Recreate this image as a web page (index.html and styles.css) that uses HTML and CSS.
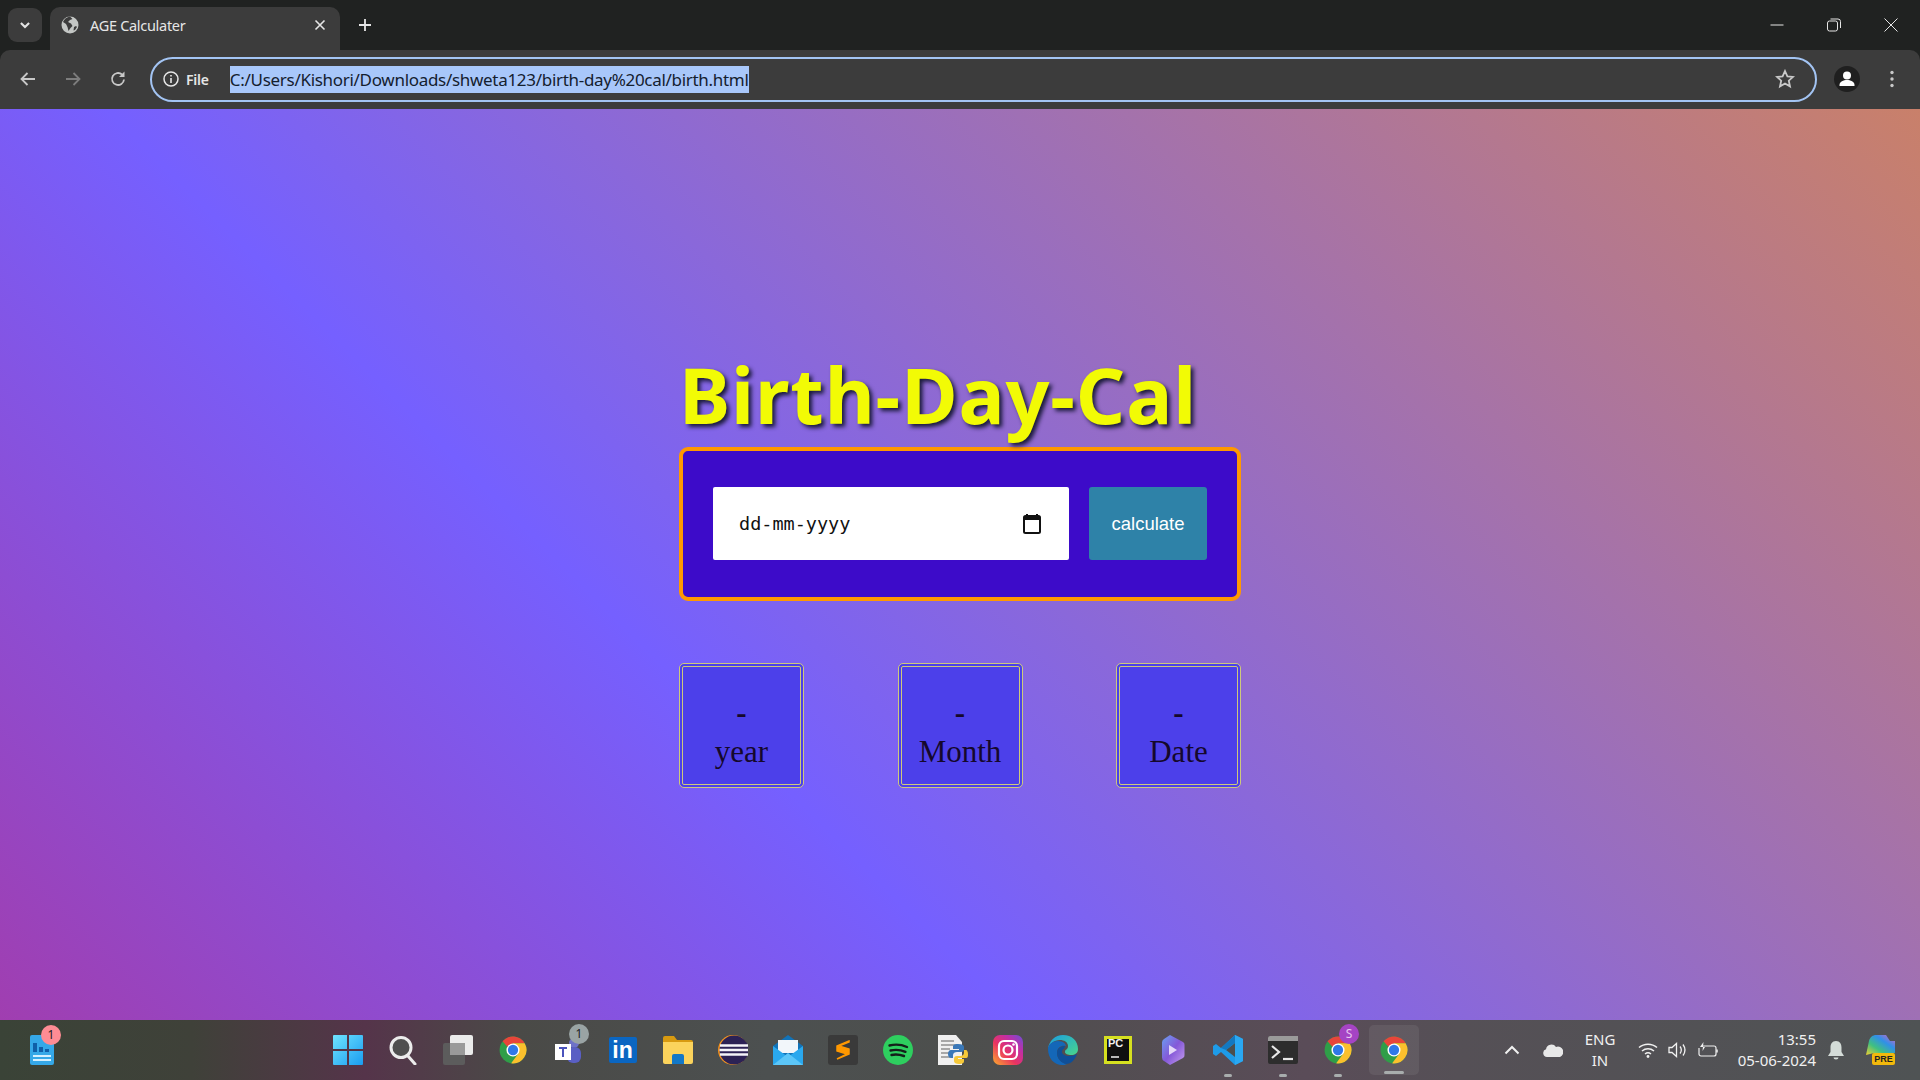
FILE: index.html
```html
<!DOCTYPE html>
<html lang="en">
<head>
	<meta charset="UTF-8">
	<title>AGE Calculater</title>
	<link rel="stylesheet" href="styles.css">
</head>
<body>
	<svg class="defs" width="0" height="0">
		<symbol id="chrome" viewBox="0 0 24 24">
			<circle cx="12" cy="12" r="11.5" fill="#2f9e48"/>
			<path d="M3 4.6A11.5 11.5 0 0 1 22 6.3H12L7.2 9.2Z" fill="#e8453a"/>
			<path d="M22 6.3H12L16.8 14.8 10.4 23.4A11.5 11.5 0 0 0 22 6.3Z" fill="#fbc02d"/>
			<circle cx="12" cy="12" r="5.6" fill="#fff"/>
			<circle cx="12" cy="12" r="4.4" fill="#2f78e8"/>
		</symbol>
	</svg>

	<!-- tab strip -->
	<div class="tabstrip">
		<div class="tablist-btn">
			<svg width="14" height="14" viewBox="0 0 12 12"><path d="M2.5 4.2 6 7.8 9.500 4.200" fill="none" stroke="#e4e4e4" stroke-width="1.800"/></svg>
		</div>
		<div class="tab">
			<svg class="tab-globe" width="18" height="18" viewBox="0 0 18 18">
				<circle cx="9" cy="9" r="8.500" fill="#c4c7c5"/>
				<path d="M9 .5C6 1 3 3 2 6l3 2 1.500 3 1 4 2-3 2-2-1.500-2.500L7 6l2-2 2.500-1ZM13 11l2-1 1 1-2 3-1.500.5Z" fill="#3c3c3c"/>
			</svg>
			<span class="tab-title">AGE Calculater</span>
			<svg class="tab-close" width="12" height="12" viewBox="0 0 12 12"><path d="M1.500 1.500 10.500 10.500M10.500 1.500 1.500 10.500" stroke="#e6e6e6" stroke-width="1.600"/></svg>
		</div>
		<svg class="newtab" width="14" height="14" viewBox="0 0 14 14"><path d="M7 1V13M1 7H13" stroke="#e6e6e6" stroke-width="1.800"/></svg>
		<div class="winctl">
			<svg width="14" height="14" viewBox="0 0 14 14"><path d="M.5 7H13.500" stroke="#e6e6e6"/></svg>
			<svg width="14" height="14" viewBox="0 0 14 14"><rect x=".5" y="3" width="10" height="10" rx="2" fill="none" stroke="#e6e6e6"/><path d="M3.500 1H11a2.500 2.500 0 0 1 2.500 2.500V10" fill="none" stroke="#e6e6e6"/></svg>
			<svg width="14" height="14" viewBox="0 0 14 14"><path d="M.5.5 13.500 13.500M13.500.5.5 13.500" stroke="#e6e6e6"/></svg>
		</div>
	</div>

	<!-- address bar -->
	<div class="toolbar">
		<svg class="nav" width="18" height="18" viewBox="0 0 18 18"><path d="M16 9H3M8.500 3 2.500 9l6 6" fill="none" stroke="#c8c8c8" stroke-width="1.800"/></svg>
		<svg class="nav" width="18" height="18" viewBox="0 0 18 18"><path d="M2 9H15M9.500 3l6 6-6 6" fill="none" stroke="#7d7d7d" stroke-width="1.800"/></svg>
		<svg class="nav" width="18" height="18" viewBox="0 0 18 18"><path d="M15 9.500A6 6 0 1 1 13 4.500" fill="none" stroke="#c8c8c8" stroke-width="1.800"/><path d="M15.500 1.500V7H10Z" fill="#c8c8c8"/></svg>
		<div class="omnibox">
			<svg width="16" height="16" viewBox="0 0 16 16"><circle cx="8" cy="8" r="7" fill="none" stroke="#e6e6e6" stroke-width="1.500"/><path d="M8 7V12M8 4V5.600" stroke="#e6e6e6" stroke-width="1.600"/></svg>
			<span class="chip">File</span>
			<span class="url">C:/Users/Kishori/Downloads/shweta123/birth-day%20cal/birth.html</span>
			<svg class="star" width="20" height="20" viewBox="0 0 20 20"><path d="M10 2l2.400 5.300 5.600.6-4.200 3.800 1.200 5.700L10 14.500l-5 2.900 1.200-5.700L2 7.900l5.600-.6Z" fill="none" stroke="#c8c8c8" stroke-width="1.800"/></svg>
		</div>
		<svg class="avatar" width="26" height="26" viewBox="0 0 26 26"><circle cx="13" cy="13" r="13" fill="#1f1f1f"/><circle cx="13" cy="9.500" r="4" fill="#fff"/><path d="M5.500 19c0-3.500 4-5 7.500-5s7.500 1.500 7.500 5v1h-15Z" fill="#fff"/></svg>
		<svg class="kebab" width="4" height="18" viewBox="0 0 4 18"><circle cx="2" cy="2.500" r="1.700" fill="#c8c8c8"/><circle cx="2" cy="9" r="1.700" fill="#c8c8c8"/><circle cx="2" cy="15.500" r="1.700" fill="#c8c8c8"/></svg>
	</div>

	<!-- the page itself -->
	<main class="page">
		<div class="calc">
			<h1>Birth-Day-Cal</h1>
			<div class="card">
				<div class="dateinput">
					<span>dd-mm-yyyy</span>
					<svg width="18" height="20" viewBox="0 0 18 20"><path d="M4 0V3M14 0V3" stroke="#111" stroke-width="2"/><rect x="1" y="2" width="16" height="17" rx="1.500" fill="none" stroke="#111" stroke-width="2"/><rect x="1" y="2" width="16" height="4" fill="#111"/></svg>
				</div>
				<button class="calcbtn">calculate</button>
			</div>
			<div class="results">
				<div class="result"><b>-</b><br>year</div>
				<div class="result"><b>-</b><br>Month</div>
				<div class="result"><b>-</b><br>Date</div>
			</div>
		</div>
	</main>

	<!-- windows taskbar -->
	<footer class="taskbar">
		<div class="slot widget">
			<svg width="24" height="30" viewBox="0 0 24 30"><rect width="24" height="30" rx="2" fill="#35a8e8"/><path d="M3 8h4v9H3ZM9 12h4v5H9ZM15 14h4v3h-4Z" fill="#0f5fa8"/><path d="M3 21h18M3 25h18" stroke="#d4f0ff" stroke-width="2"/></svg>
			<span class="badge badge-pink">1</span>
		</div>
		<div class="apps">
			<div class="slot">
				<svg width="30" height="30" viewBox="0 0 30 30"><defs><linearGradient id="win" x1="0" y1="0" x2="1" y2="1"><stop offset="0" stop-color="#6fe4ff"/><stop offset="1" stop-color="#1a9cf0"/></linearGradient></defs><path d="M0 1a1 1 0 0 1 1-1H14V14H0ZM16 0H29a1 1 0 0 1 1 1V14H16ZM0 16H14V30H1a1 1 0 0 1-1-1ZM16 16H30V29a1 1 0 0 1-1 1H16Z" fill="url(#win)"/></svg>
			</div>
			<div class="slot">
				<svg width="28" height="30" viewBox="0 0 28 30"><circle cx="12" cy="12.500" r="10" fill="#4f4f4f" stroke="#ececec" stroke-width="3"/><path d="M19 21l7 8" stroke="#ececec" stroke-width="3" stroke-linecap="round"/></svg>
			</div>
			<div class="slot">
				<svg width="30" height="30" viewBox="0 0 30 30"><rect y="8" width="22" height="22" rx="2" fill="#5c5c5c"/><rect x="7" width="23" height="20" rx="2" fill="#ebebeb"/><rect x="7" y="8" width="15" height="12" fill="#9a9a9a"/></svg>
			</div>
			<div class="slot"><svg width="28" height="30"><use href="#chrome"/></svg></div>
			<div class="slot">
				<svg width="30" height="28" viewBox="0 0 30 28"><circle cx="21" cy="7" r="5" fill="#6f72c8"/><rect x="14" y="11" width="14" height="16" rx="6" fill="#5a5fc4"/><rect x="2" y="8" width="16" height="16" fill="#fff"/><path d="M6 11h8v2h-3v8H9v-8H6Z" fill="#4b53bc"/></svg>
				<span class="badge badge-grey">1</span>
			</div>
			<div class="slot"><span class="linkedin">in</span></div>
			<div class="slot">
				<svg width="30" height="28" viewBox="0 0 30 28"><path d="M0 2a2 2 0 0 1 2-2h9l3 4h14a2 2 0 0 1 2 2v4H0Z" fill="#d89a10"/><path d="M0 6H30V26a2 2 0 0 1-2 2H2a2 2 0 0 1-2-2Z" fill="#fbd35c"/><path d="M9 20a2 2 0 0 1 2-2h8a2 2 0 0 1 2 2v8H9Z" fill="#1378c8"/></svg>
			</div>
			<div class="slot">
				<svg width="30" height="30" viewBox="0 0 30 30"><circle cx="15" cy="15" r="15" fill="#f7941e"/><circle cx="16" cy="15" r="14.500" fill="#2c2255"/><path d="M2 10.500H30M1.500 15H30.500M2 19.500H30" stroke="#f4f4f8" stroke-width="2.400"/></svg>
			</div>
			<div class="slot">
				<svg width="30" height="30" viewBox="0 0 30 30"><path d="M0 11 15 0 30 11V30H0Z" fill="#1273b8"/><path d="M5 5H25V18H5Z" fill="#f2f6fa"/><path d="M0 11 15 22 30 11V30H0Z" fill="#2aa8ee"/><path d="M0 30 15 18 30 30Z" fill="#5cc6f8"/></svg>
			</div>
			<div class="slot">
				<svg width="30" height="30" viewBox="0 0 30 30"><rect width="30" height="30" rx="3" fill="#3a3a3a"/><path d="M21 6 9 11v5l10 3-10 5 12-5v-5L11 11l10-4Z" fill="#ff9800" stroke="#ff9800" stroke-width="1.500"/></svg>
			</div>
			<div class="slot">
				<svg width="30" height="30" viewBox="0 0 30 30"><circle cx="15" cy="15" r="15" fill="#2ecf5f"/><path d="M6.500 10.500c6-1.500 12-1 17.500 1.500M7.500 15.500c5-1.200 10-.8 15 1.300M8.500 20c4-1 8-.6 12.500 1" fill="none" stroke="#14201a" stroke-width="2.400" stroke-linecap="round"/></svg>
			</div>
			<div class="slot">
				<svg width="30" height="30" viewBox="0 0 30 30"><path d="M0 0H18L24 7V30H0Z" fill="#f0f0f0"/><path d="M3 6H16M3 10H20M3 14H12M3 18H12M3 22H12" stroke="#a8a8a8" stroke-width="2"/><path d="M20 9c-4 0-5 1-5 3v2h6v1h-8c-2 0-3 2-3 4s1 4 3 4h2v-3c0-2 2-3 4-3h4c2 0 3-1 3-3v-2c0-2-2-3-6-3Z" fill="#3a78b8"/><path d="M21 29c4 0 5-1 5-3v-2h-6v-1h8c2 0 2-2 2-4s-1-4-2-4h-2v3c0 2-2 3-4 3h-3c-2 0-3 1-3 3v2c0 2 2 3 5 3Z" fill="#f5c838"/></svg>
			</div>
			<div class="slot">
				<svg width="30" height="30" viewBox="0 0 30 30"><defs><linearGradient id="insta" x1="0" y1="1" x2="1" y2="0"><stop offset="0" stop-color="#fcae2c"/><stop offset=".4" stop-color="#ea3460"/><stop offset=".7" stop-color="#c32ea5"/><stop offset="1" stop-color="#6a4fd8"/></linearGradient></defs><rect width="30" height="30" rx="7" fill="url(#insta)"/><rect x="6" y="6" width="18" height="18" rx="5" fill="none" stroke="#fff" stroke-width="2.200"/><circle cx="15" cy="15" r="4.500" fill="none" stroke="#fff" stroke-width="2.200"/><circle cx="20.500" cy="9.500" r="1.300" fill="#fff"/></svg>
			</div>
			<div class="slot">
				<svg width="30" height="30" viewBox="0 0 30 30"><defs><linearGradient id="edge" x1="0" y1="0" x2="1" y2="1"><stop offset="0" stop-color="#1b9de2"/><stop offset="1" stop-color="#49d68a"/></linearGradient></defs><path d="M15 0C24 0 30 6 30 14c0 4-3 6-7 6-3 0-6-1-6-3 0-3 3-2 3-6 0-4-4-6-8-6C6 5 1 9 0 14 1 6 7 0 15 0Z" fill="url(#edge)"/><path d="M0 14c0-5 5-8 10-8 5 0 8 3 8 5-4-1-9 1-9 7 0 5 4 10 10 11-2 1-3 1-5 1C6 30 0 23 0 14Z" fill="#1467b8"/><path d="M9 18c0-5 4-7 8-7 0 3-3 3-3 6 0 2 3 4 7 4 3 0 6-1 8-2-2 6-6 10-11 10-5-1-9-6-9-11Z" fill="#0f4f98"/></svg>
			</div>
			<div class="slot">
				<svg class="pycharm" width="28" height="28" viewBox="0 0 28 28"><rect width="28" height="28" fill="#d6e020"/><rect x="3" y="3" width="22" height="22" fill="#101010"/><path d="M7 21H15" stroke="#f0f0f0" stroke-width="1.500"/></svg>
				<span class="pc">PC</span>
			</div>
			<div class="slot">
				<svg width="28" height="30" viewBox="0 0 28 30"><defs><linearGradient id="cop" x1="0" y1="0" x2="1" y2="1"><stop offset="0" stop-color="#6aa0f0"/><stop offset=".5" stop-color="#8458d8"/><stop offset="1" stop-color="#c8a0f0"/></linearGradient></defs><path d="M11 0 24 7a3 3 0 0 1 1.500 3V20a3 3 0 0 1-1.500 3L11 30 5 26a4 4 0 0 1-2-3.500V7.500A4 4 0 0 1 5 4Z" fill="url(#cop)"/><path d="M10 10 18 15 10 20Z" fill="#e4d8f8"/></svg>
			</div>
			<div class="slot">
				<svg width="30" height="30" viewBox="0 0 30 30"><path d="M22 0 30 4V26L22 30 8 17 3 21 0 19V11L3 9 8 13Z" fill="#1e9be8"/><path d="M22 0 30 4V26L22 30Z" fill="#2aa8f2"/><path d="M22 8 13 15 22 22Z" fill="#4b4f4e"/><path d="M22 0 22 8 13 15 8 13Z" fill="#1378c0"/></svg>
				<i class="dot"></i>
			</div>
			<div class="slot">
				<svg width="30" height="28" viewBox="0 0 30 28"><rect width="30" height="28" rx="2" fill="#2d2d2d"/><path d="M0 2a2 2 0 0 1 2-2H30V5H0Z" fill="#9a9a9a"/><path d="M4 10l7 6-7 6" fill="none" stroke="#e8e8e8" stroke-width="2.200"/><path d="M15 23H25" stroke="#e8e8e8" stroke-width="2.200"/></svg>
				<i class="dot"></i>
			</div>
			<div class="slot">
				<svg width="28" height="30"><use href="#chrome"/></svg>
				<span class="badge badge-purple">S</span>
				<i class="dot"></i>
			</div>
			<div class="slot slot-active">
				<svg width="28" height="30"><use href="#chrome"/></svg>
				<i class="dot dot-wide"></i>
			</div>
		</div>
		<div class="tray">
			<svg class="tray-chevron" width="16" height="10" viewBox="0 0 16 10"><path d="M1.500 8.500 8 2l6.500 6.500" fill="none" stroke="#f0f0f0" stroke-width="2"/></svg>
			<svg class="tray-cloud" width="20" height="14" viewBox="0 0 20 14"><path d="M4 14a4 4 0 0 1-1-7.800A5.500 5.500 0 0 1 13 4a4.800 4.800 0 0 1 4 10Z" fill="#e8e8e8"/></svg>
			<div class="lang">ENG<br>IN</div>
			<svg class="tray-wifi" width="20" height="16" viewBox="0 0 20 16"><path d="M1 5.500c5-4.500 13-4.500 18 0M4 9c3.500-3 8.500-3 12 0M7 12c1.800-1.400 4.200-1.400 6 0" fill="none" stroke="#f0f0f0" stroke-width="1.500"/><circle cx="10" cy="14.500" r="1.400" fill="#f0f0f0"/></svg>
			<svg class="tray-vol" width="20" height="16" viewBox="0 0 20 16"><path d="M1 5.500H4L8.500 1.500V14.500L4 10.500H1Z" fill="none" stroke="#f0f0f0" stroke-width="1.300"/><path d="M12 4.500c1.500 2 1.500 5 0 7M15 2.500c2.500 3.500 2.500 7.500 0 11" fill="none" stroke="#f0f0f0" stroke-width="1.300"/></svg>
			<svg class="tray-batt" width="20" height="16" viewBox="0 0 20 16"><path d="M4 4H16a2 2 0 0 1 2 2V12a2 2 0 0 1-2 2H3a2 2 0 0 1-2-2V6" fill="none" stroke="#f0f0f0" stroke-width="1.200"/><path d="M19 7.500V10.500" stroke="#f0f0f0" stroke-width="1.500"/><path d="M5.500 0 2 5H7L4.500 9Z" fill="#f0f0f0"/></svg>
			<div class="clock">13:55<br>05-06-2024</div>
			<svg class="tray-bell" width="16" height="19" viewBox="0 0 16 19"><path d="M8 0c4 0 5.500 3 5.500 6.500V11L16 15H0L2.500 11V6.500C2.500 3 4 0 8 0Z" fill="#d4dcd8"/><path d="M5.500 16.500h5a2.500 2 0 0 1-5 0Z" fill="#d4dcd8"/></svg>
			<div class="copilot">
				<svg width="29" height="22" viewBox="0 0 29 22"><defs><linearGradient id="cp" x1="0" y1="1" x2="1" y2="0"><stop offset="0" stop-color="#f0d030"/><stop offset=".35" stop-color="#40c080"/><stop offset=".65" stop-color="#3090e8"/><stop offset="1" stop-color="#e060c0"/></linearGradient></defs><path d="M10 0H20L24 6H29V18H8L0 20 3 6C4 2 7 0 10 0Z" fill="url(#cp)"/></svg>
				<span class="pre">PRE</span>
			</div>
		</div>
	</footer>
</body>
</html>
```
FILE: styles.css
```css
* {
	box-sizing: border-box;
}
html, body {
	margin: 0;
	height: 100%;
}
body {
	display: flex;
	flex-direction: column;
	overflow: hidden;
	font-family: "Noto Sans", sans-serif;
	background: #202221;
}
.defs {
	position: absolute;
}

/* tab strip */
.tabstrip {
	height: 50px;
	flex: none;
	display: flex;
	align-items: flex-end;
	background: #202221;
	padding-left: 8px;
}
.tablist-btn {
	width: 34px;
	height: 34px;
	margin-bottom: 8px;
	border-radius: 9px;
	background: #3c3c3c;
	display: flex;
	align-items: center;
	justify-content: center;
}
.tab {
	width: 290px;
	height: 43px;
	margin-left: 8px;
	padding: 0 14px 8px 11px;
	border-radius: 10px 10px 0 0;
	background: #3c3c3c;
	display: flex;
	align-items: center;
	color: #e6e6e6;
}
.tab-title {
	margin-left: 11px;
	font-size: 14.500px;
	letter-spacing: -.3px;
	flex: 1;
}
.newtab {
	margin: 0 0 18px 18px;
}
.winctl {
	margin-left: auto;
	display: flex;
	gap: 43px;
	padding: 0 22px 18px 0;
}

/* toolbar */
.toolbar {
	height: 59px;
	flex: none;
	display: flex;
	align-items: center;
	background: #3c3c3c;
	border-radius: 10px 10px 0 0;
	padding: 0 0 1px 19px;
}
.nav {
	margin-right: 27px;
}
.nav:nth-child(3) {
	margin-right: 24px;
}
.omnibox {
	width: 1667px;
	height: 45px;
	margin-left: -1px;
	border: 2.500px solid #a3c4f3;
	border-radius: 23px;
	display: flex;
	align-items: center;
	padding-left: 11px;
	color: #e6e6e6;
}
.chip {
	margin-left: 7px;
	font-size: 14px;
	font-weight: 600;
	letter-spacing: -.2px;
}
.url {
	margin-left: 21px;
	height: 27px;
	line-height: 27px;
	background: #a8c7fa;
	color: #14202e;
	font-size: 17px;
	letter-spacing: -.3px;
	white-space: nowrap;
}
.star {
	margin-left: auto;
	margin-right: 20px;
}
.avatar {
	margin-left: 17px;
}
.kebab {
	margin-left: 30px;
}

/* page */
.page {
	flex: 1;
	display: flex;
	justify-content: center;
	background: linear-gradient(45deg, #a03eb0 0%, #7560ff 36%, #c9806a 100%);
}
.calc {
	width: 562px;
	padding-top: 236px;
}
h1 {
	margin: 0;
	height: 102px;
	line-height: 99px;
	font-family: "Noto Sans", sans-serif;
	font-size: 77px;
	font-weight: 700;
	letter-spacing: .9px;
	color: #f2fb05;
	text-shadow: 3px 3px 4px #1a1a3a;
	white-space: nowrap;
}
.card {
	height: 154px;
	display: flex;
	align-items: center;
	gap: 20px;
	padding: 0 30px 1px;
	background: #3d0bc9;
	border: 4px solid #ff9800;
	border-radius: 9px;
}
.dateinput {
	width: 356px;
	height: 73px;
	background: #fff;
	border-radius: 2px;
	display: flex;
	align-items: center;
	justify-content: space-between;
	padding: 0 28px 0 26px;
	font-family: "DejaVu Sans Mono", monospace;
	font-size: 18.500px;
	color: #111;
}
.calcbtn {
	width: 118px;
	height: 73px;
	border: 0;
	border-radius: 3px;
	background: #2e82a8;
	color: #fff;
	font-family: "Liberation Sans", sans-serif;
	font-size: 18.500px;
}
.results {
	display: flex;
	justify-content: space-between;
	margin-top: 62px;
}
.result {
	width: 125px;
	height: 125px;
	padding-top: 26px;
	background: #4c40ea;
	border: 4px double #cdc97c;
	border-radius: 5px;
	font-family: "Liberation Serif", serif;
	font-size: 31px;
	line-height: 39px;
	text-align: center;
	color: #15082c;
}

/* taskbar */
.taskbar {
	height: 60px;
	flex: none;
	display: flex;
	align-items: center;
	padding-left: 14px;
	background: linear-gradient(90deg, #3a4337 0%, #3f4139 10%, #55344a 19%, #4a4a47 27%, #4c5050 40%, #4d4f4d 50%, #5a4c58 68%, #555056 76%, #4f5354 100%);
}
.slot {
	width: 55px;
	height: 56px;
	flex: none;
	position: relative;
	display: flex;
	align-items: center;
	justify-content: center;
}
.apps {
	display: flex;
	margin-left: 251px;
}
.slot-active {
	width: 50px;
	height: 50px;
	margin: 3px 0 0 4px;
	background: rgba(255, 255, 255, .07);
	border-radius: 5px;
}
.badge {
	position: absolute;
	width: 20px;
	height: 20px;
	border-radius: 50%;
	font-size: 12px;
	line-height: 20px;
	text-align: center;
	color: #222;
}
.badge-pink {
	top: 3px;
	left: 27px;
	background: #ff8c94;
}
.badge-grey {
	top: 2px;
	left: 29px;
	background: #9aa4a4;
}
.badge-purple {
	top: 2px;
	left: 29px;
	background: #a544c4;
	color: #e8c8f0;
}
.dot {
	position: absolute;
	bottom: 1px;
	left: 24px;
	width: 8px;
	height: 3px;
	border-radius: 2px;
	background: #a8adad;
}
.dot-wide {
	left: 15px;
	width: 20px;
	bottom: 1px;
}
.linkedin {
	width: 28px;
	height: 26px;
	border-radius: 2px;
	background: #0a66c2;
	color: #fff;
	font-family: "Liberation Sans", sans-serif;
	font-weight: 700;
	font-size: 23px;
	line-height: 27px;
	text-align: center;
}
.pc {
	position: absolute;
	top: 15px;
	left: 18px;
	color: #f0f0f0;
	font-family: "Liberation Sans", sans-serif;
	font-weight: 700;
	font-size: 11px;
}
.tray {
	margin-left: auto;
	display: flex;
	align-items: center;
	color: #f0f0f0;
	padding-right: 25px;
}
.tray-chevron {
	margin-right: 23px;
}
.tray-cloud {
	margin-right: 21px;
}
.lang {
	width: 32px;
	font-size: 15px;
	line-height: 21px;
	text-align: center;
	margin-right: 22px;
}
.tray-wifi,
.tray-vol {
	margin-right: 10px;
}
.clock {
	width: 88px;
	font-size: 15px;
	line-height: 21px;
	text-align: right;
	margin-left: 10px;
}
.tray-bell {
	margin-left: 12px;
}
.copilot {
	position: relative;
	width: 29px;
	height: 30px;
	margin-left: 22px;
}
.pre {
	position: absolute;
	right: 0;
	bottom: 0;
	width: 23px;
	height: 12px;
	border-radius: 2px;
	background: #f2b90c;
	color: #222;
	font-family: "Liberation Sans", sans-serif;
	font-size: 9px;
	font-weight: 700;
	line-height: 12px;
	text-align: center;
}
```
